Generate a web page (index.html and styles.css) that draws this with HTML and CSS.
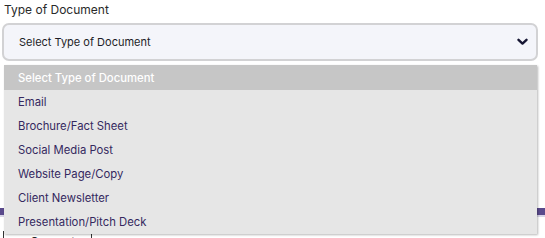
FILE: index.html
```html
<!DOCTYPE html>
<html lang="en">
<head>
    <meta charset="UTF-8">
    <meta name="viewport" content="width=device-width, initial-scale=1.0">
    <title>Type of Document</title>
    <link rel="stylesheet" href="styles.css">
</head>
<body>
    <div class="form">
        <label class="label" for="docType">Type of Document</label>
        <div class="select-wrap">
            <div class="select" id="docType">
                <span>Select Type of Document</span>
                <svg class="chevron" width="11" height="8" viewBox="0 0 11 8">
                    <path d="M1.5 1.8 L5.5 5.6 L9.5 1.8" fill="none" stroke="#161633" stroke-width="2.4" stroke-linecap="round" stroke-linejoin="round"/>
                </svg>
            </div>
            <ul class="options">
                <li class="selected">Select Type of Document</li>
                <li>Email</li>
                <li>Brochure/Fact Sheet</li>
                <li>Social Media Post</li>
                <li>Website Page/Copy</li>
                <li>Client Newsletter</li>
                <li>Presentation/Pitch Deck</li>
            </ul>
        </div>
        <div class="divider"></div>
        <div class="tabs">
            <div class="tab">Generate</div>
            <div class="tab"></div>
        </div>
    </div>
</body>
</html>
```

FILE: styles.css
```css
body {
    margin: 0;
    font-family: Inter, "Noto Sans", sans-serif;
    background-color: #ffffff;
    color: #222;
    overflow: hidden;
}
.form {
    padding: 3px 0 0 0;
}
.label {
    display: block;
    font-size: 12px;
    color: #2a2a2a;
    padding-left: 4px;
    height: 14px;
    line-height: 14px;
}
.select-wrap {
    position: relative;
    margin-top: 6px;
}
.select {
    margin: 0 7px 0 2px;
    height: 34px;
    border: 2px solid #d2d2d4;
    border-radius: 7px;
    background-color: #f4f5fa;
    display: flex;
    align-items: center;
    justify-content: space-between;
    padding: 0 8px 0 15px;
    font-size: 11px;
    color: #1e1e28;
}
.chevron {
    display: block;
}
.options {
    position: absolute;
    top: 42px;
    left: 4px;
    width: 533px;
    margin: 0;
    padding: 0;
    list-style: none;
    background-color: #e6e6e6;
    box-shadow: 1px 1px 2px rgba(0, 0, 0, 0.28);
    z-index: 10;
}
.options li {
    height: 24px;
    line-height: 25px;
    padding-left: 14px;
    font-size: 11.3px;
    color: #35295f;
}
.options li.selected {
    background-color: #c6c6c6;
    color: #ffffff;
    font-weight: 500;
    height: 25px;
    line-height: 26px;
}
.divider {
    margin-top: 147px;
    height: 7px;
    background-color: #5a4a8c;
    border-bottom: 2px solid #d9d6e8;
}
.tabs {
    display: flex;
    margin-top: 14px;
    margin-left: 3px;
}
.tab {
    width: 88px;
    height: 20px;
    border-left: 1px solid #333;
    font-size: 12px;
    padding-left: 26px;
    box-sizing: border-box;
    padding-top: 3px;
}
```
